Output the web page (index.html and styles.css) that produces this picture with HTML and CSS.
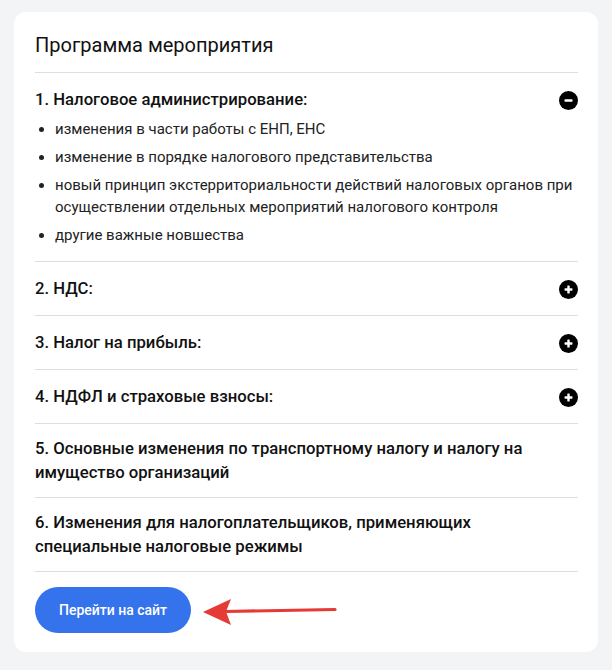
FILE: index.html
```html
<!DOCTYPE html>
<html lang="ru">
<head>
<meta charset="utf-8">
<title>Программа мероприятия</title>
<link rel="stylesheet" href="styles.css">
</head>
<body>
<div class="card">
  <h2 class="card-title">Программа мероприятия</h2>
  <div class="acc">
    <div class="acc-item open">
      <div class="acc-head">
        <div class="acc-title">1. Налоговое администрирование:</div>
        <span class="acc-icon"><svg width="19" height="19" viewBox="0 0 19 19"><circle cx="9.5" cy="9.5" r="9.5" fill="#000"/><rect x="5.5" y="8.3" width="8" height="2.4" rx="0.6" fill="#fff"/></svg></span>
      </div>
      <ul class="acc-list">
        <li>изменения в части работы с ЕНП, ЕНС</li>
        <li>изменение в порядке налогового представительства</li>
        <li>новый принцип экстерриториальности действий налоговых органов при осуществлении отдельных мероприятий налогового контроля</li>
        <li>другие важные новшества</li>
      </ul>
    </div>
    <div class="acc-item">
      <div class="acc-head">
        <div class="acc-title">2. НДС:</div>
        <span class="acc-icon"><svg width="19" height="19" viewBox="0 0 19 19"><circle cx="9.5" cy="9.5" r="9.5" fill="#000"/><rect x="5.5" y="8.3" width="8" height="2.4" rx="0.6" fill="#fff"/><rect x="8.3" y="5.5" width="2.4" height="8" rx="0.6" fill="#fff"/></svg></span>
      </div>
    </div>
    <div class="acc-item">
      <div class="acc-head">
        <div class="acc-title">3. Налог на прибыль:</div>
        <span class="acc-icon"><svg width="19" height="19" viewBox="0 0 19 19"><circle cx="9.5" cy="9.5" r="9.5" fill="#000"/><rect x="5.5" y="8.3" width="8" height="2.4" rx="0.6" fill="#fff"/><rect x="8.3" y="5.5" width="2.4" height="8" rx="0.6" fill="#fff"/></svg></span>
      </div>
    </div>
    <div class="acc-item">
      <div class="acc-head">
        <div class="acc-title">4. НДФЛ и страховые взносы:</div>
        <span class="acc-icon"><svg width="19" height="19" viewBox="0 0 19 19"><circle cx="9.5" cy="9.5" r="9.5" fill="#000"/><rect x="5.5" y="8.3" width="8" height="2.4" rx="0.6" fill="#fff"/><rect x="8.3" y="5.5" width="2.4" height="8" rx="0.6" fill="#fff"/></svg></span>
      </div>
    </div>
    <div class="acc-item">
      <div class="acc-head">
        <div class="acc-title">5. Основные изменения по транспортному налогу и налогу на имущество организаций</div>
        <span class="acc-icon"></span>
      </div>
    </div>
    <div class="acc-item">
      <div class="acc-head">
        <div class="acc-title">6. Изменения для налогоплательщиков, применяющих специальные налоговые режимы</div>
        <span class="acc-icon"></span>
      </div>
    </div>
  </div>
  <div class="actions">
    <a class="btn" href="#">Перейти на сайт</a>
    <svg class="arrow" width="136" height="30" viewBox="0 0 136 30">
      <line x1="24" y1="14.5" x2="133" y2="12.5" stroke="#e53a35" stroke-width="3.2" stroke-linecap="round"/>
      <path d="M1 15 L29 2 L24 14.5 L29 28 Z" fill="#e53a35"/>
    </svg>
  </div>
</div>
</body>
</html>
```
FILE: styles.css
```css
* { box-sizing: border-box; }
html, body { margin: 0; }
body {
  background: #f3f4f6;
  padding: 12px 14px 18px;
  font-family: Roboto, "Noto Sans", Arial, sans-serif;
  color: #111;
}
.card {
  width: 584px;
  background: #fff;
  border-radius: 12px;
  padding: 20px 20px 19px 21px;
}
.card-title {
  margin: 0 0 14px;
  font-size: 20px;
  line-height: 26px;
  font-weight: 400;
  color: #111;
}
.acc { border-top: 1px solid #dedede; }
.acc-item {
  border-bottom: 1px solid #dedede;
  padding: 13px 0 12px;
}
.acc-item.open { padding-bottom: 15px; }
.acc-head {
  display: flex;
  align-items: center;
  gap: 24px;
}
.acc-title {
  flex: 1;
  font-size: 16.7px;
  line-height: 24px;
  font-weight: 500;
  color: #111;
}
.acc-icon {
  width: 19px;
  height: 28px;
  flex: none;
  display: flex;
  align-items: center;
  justify-content: flex-end;
}
.acc-icon svg { display: block; }
.acc-list {
  margin: 4px 0 0;
  padding: 0 0 0 20px;
  font-size: 15px;
  line-height: 22px;
  color: #222;
}
.acc-list li { margin-bottom: 6px; }
.acc-list li:last-child { margin-bottom: 0; }
.actions {
  display: flex;
  align-items: center;
  gap: 11px;
  margin-top: 15px;
}
.btn {
  display: inline-flex;
  align-items: center;
  justify-content: center;
  width: 156px;
  height: 46px;
  border-radius: 23px;
  background: #3473ec;
  color: #fff;
  font-size: 14px;
  font-weight: 500;
  text-decoration: none;
}
.arrow { display: block; margin-top: 3px; }
```
